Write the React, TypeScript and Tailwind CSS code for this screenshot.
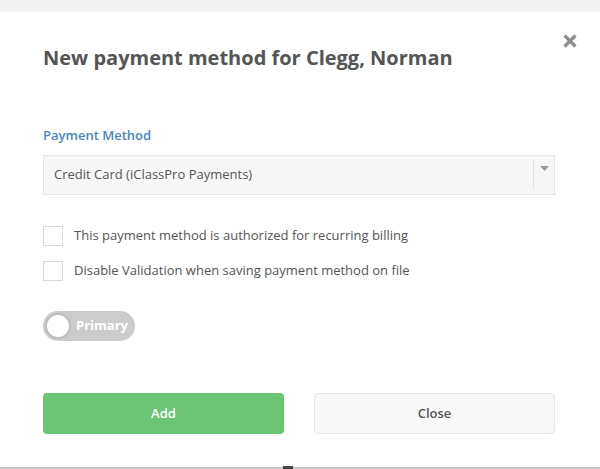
import React from "react";

export default function App() {
  return (
    <div
      className="relative w-[600px] h-[469px] overflow-hidden bg-white text-[#555]"
      style={{ fontFamily: '"Open Sans", "Noto Sans", sans-serif' }}
    >
      <div className="h-[12px] bg-[#f3f3f3]" />
      <button className="absolute right-[22px] top-[33px] text-[#8f8f8f]" aria-label="close">
        <svg width="16" height="16" viewBox="0 0 16 16">
          <path d="M2.5 2.5 L13.5 13.5 M13.5 2.5 L2.5 13.5" stroke="currentColor" strokeWidth="3.2" strokeLinecap="butt" />
        </svg>
      </button>
      <div className="pl-[43px] pr-[45px]">
        <h1 className="mt-[32px] text-[20px] leading-[28px] font-bold text-[#555]">
          New payment method for Clegg, Norman
        </h1>
        <div className="mt-[54px] text-[13px] leading-[18px] font-semibold text-[#4a86c4]">
          Payment Method
        </div>
        <div className="mt-[11px] h-[40px] flex items-center border border-[#e4e4e4] bg-[#f7f7f7]">
          <span className="flex-1 pl-[10px] text-[13px] text-[#555]">Credit Card (iClassPro Payments)</span>
          <div className="w-px h-[30px] bg-[#e2e2e2]" />
          <div className="w-[20px] h-full flex justify-center pt-[10px]">
            <svg width="9" height="6" viewBox="0 0 9 6">
              <path d="M0 0 H9 L4.5 5 Z" fill="#999" />
            </svg>
          </div>
        </div>
        <label className="mt-[31px] flex items-center h-[20px] gap-[11px]">
          <span className="w-[20px] h-[20px] border border-[#d9d9d9] bg-white" />
          <span className="text-[13px] text-[#555]">This payment method is authorized for recurring billing</span>
        </label>
        <label className="mt-[15px] flex items-center h-[20px] gap-[11px]">
          <span className="w-[20px] h-[20px] border border-[#d9d9d9] bg-white" />
          <span className="text-[13px] text-[#555]">Disable Validation when saving payment method on file</span>
        </label>
        <div className="mt-[30px] w-[92px] h-[30px] rounded-full bg-[#cccccc] flex items-center pl-[2px]">
          <span className="w-[26px] h-[26px] rounded-full bg-white border-2 border-[#bdbdbd]" />
          <span className="ml-[5px] text-[13px] font-bold text-white">Primary</span>
        </div>
        <div className="mt-[52px] flex gap-[30px]">
          <button className="w-[242px] h-[41px] rounded-[4px] bg-[#6cc574] text-white text-[13px] font-semibold">
            Add
          </button>
          <button className="w-[242px] h-[41px] rounded-[4px] bg-[#f8f8f8] border border-[#e5e5e5] text-[#555] text-[13px] font-semibold">
            Close
          </button>
        </div>
      </div>
      <div className="absolute left-0 bottom-0 w-full h-[2px] bg-[#c4c4c4]" />
      <div className="absolute left-[283px] bottom-0 w-[10px] h-[3px] bg-[#444]" />
    </div>
  );
}
